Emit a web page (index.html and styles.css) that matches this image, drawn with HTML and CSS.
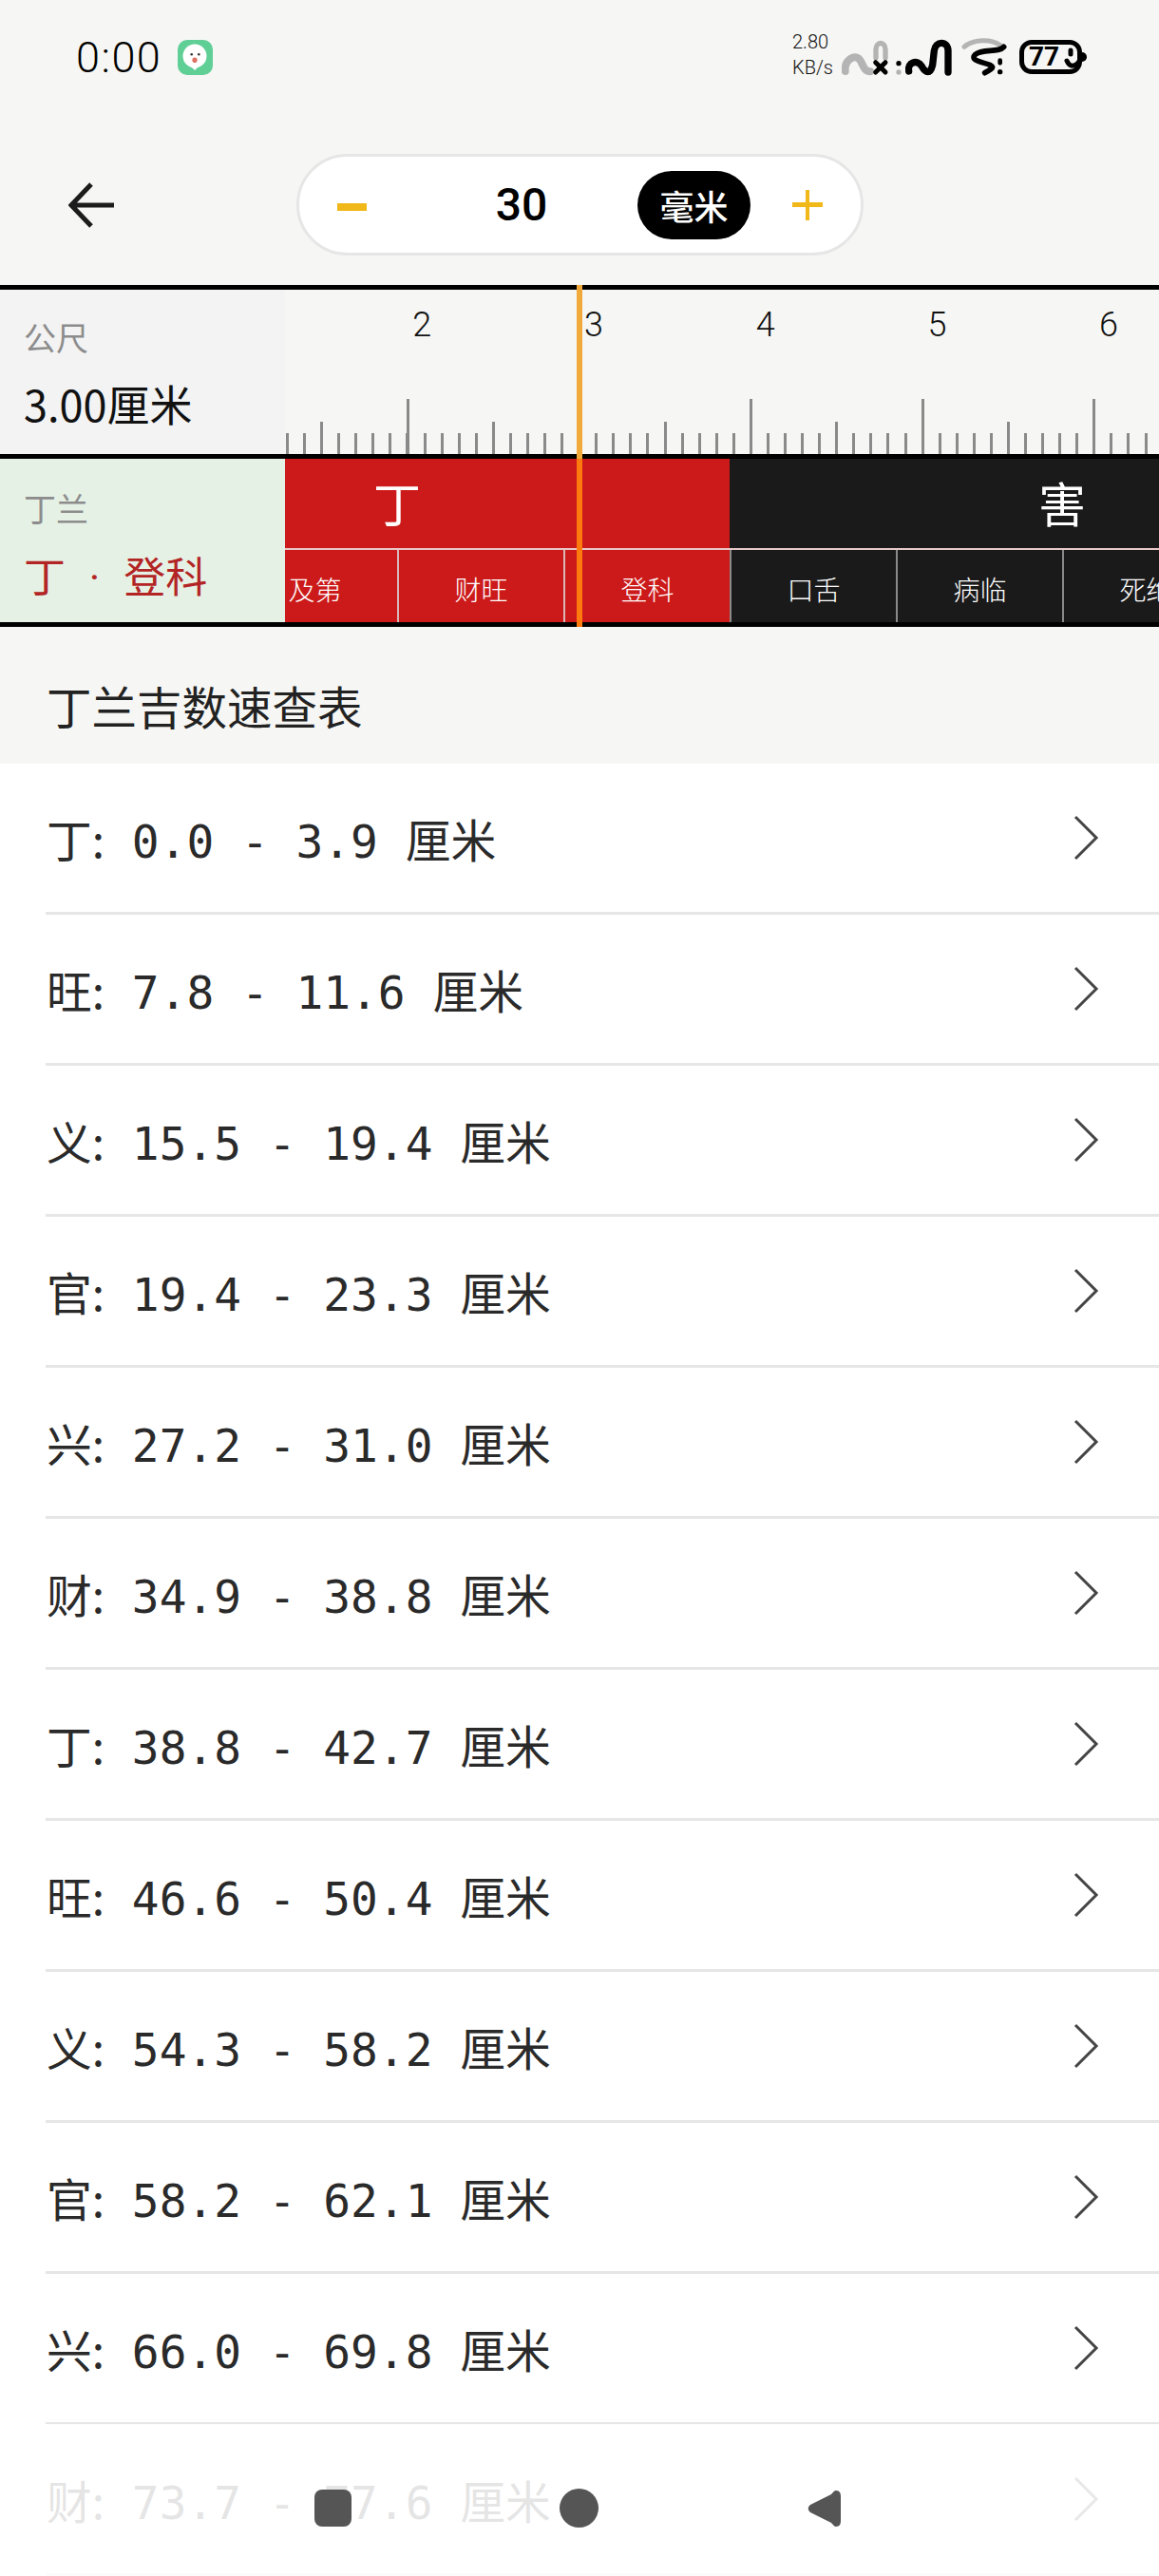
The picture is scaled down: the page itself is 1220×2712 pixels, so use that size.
FILE: index.html
```html
<!doctype html>
<html>
<head>
<meta charset="UTF-8">
<meta name="viewport" content="width=device-width, initial-scale=1">
<link rel="stylesheet" href="styles.css">
</head>
<body>
<div class="phone">

  <div class="status">
    <span class="clock">0:00</span>
    <svg class="app-icon" viewBox="0 0 37 37">
      <rect width="37" height="37" rx="10" fill="#5fcf96"/>
      <circle cx="18" cy="17" r="12.500" fill="#fff"/>
      <path d="M14 28l4 4 4-4z" fill="#fff"/>
      <circle cx="14.700" cy="15.300" r="1.300" fill="#333"/>
      <circle cx="22.300" cy="15.300" r="1.300" fill="#333"/>
      <ellipse cx="18" cy="21.300" rx="2.600" ry="2.800" fill="#e0705f"/>
    </svg>
    <div class="net-speed">2.80<br>KB/s</div>
    <svg class="status-icons" viewBox="320 60 660 120">
      <g fill="none" stroke-linecap="round" stroke-linejoin="round">
        <path d="M331 165C328 128 365 106 380 133C392 158 395 166 410 166" stroke="#b4b4b4" stroke-width="24"/>
        <path d="M428 122V96C428 70 458 70 458 96V122" stroke="#b4b4b4" stroke-width="16"/>
        <path d="M427 137L458 168M458 137L427 168" stroke="#000" stroke-width="15"/>
        <path d="M532 165C526 135 560 128 572 148C585 172 600 175 607 145L612 100C616 68 655 68 656 100V168" stroke="#000" stroke-width="22"/>
        <path d="M707 88C735 62 795 62 822 84" stroke="#b4b4b4" stroke-width="15"/>
        <path d="M832 88C815 108 765 92 742 112C722 132 765 135 790 146C806 154 785 162 772 170" stroke="#000" stroke-width="17"/>
      </g>
      <rect x="813" y="124" width="14" height="22" rx="7" fill="#000"/>
      <circle cx="820" cy="167" r="8" fill="#000"/>
      <circle cx="500" cy="140" r="8" fill="#000"/>
      <circle cx="500" cy="168" r="8" fill="#b4b4b4"/>
    </svg>
    <div class="battery">
      <span class="battery-num">77</span>
      <svg class="battery-bolt" viewBox="0 0 20 26"><path d="M9 6v4M5 17c3 7 9 7 14-1" fill="none" stroke="#000" stroke-width="5" stroke-linecap="round"/></svg>
    </div>
  </div>

  <div class="toolbar">
    <svg class="back" viewBox="0 0 48 48">
      <path d="M24 2L3 24l21 22M3 24h45" fill="none" stroke="#1c1c1c" stroke-width="5"/>
    </svg>
    <div class="stepper">
      <span class="minus"></span>
      <span class="value">30</span>
      <span class="unit">毫米</span>
      <span class="plus"></span>
    </div>
  </div>

  <div class="ruler">
    <div class="ruler-row">
      <div class="ruler-info">
        <div class="info-label">公尺</div>
        <div class="info-value">3.00厘米</div>
      </div>
      <div class="scale">
        <span>2</span><span>3</span><span>4</span><span>5</span><span>6</span>
      </div>
    </div>
    <div class="sector-row">
      <div class="ruler-info green">
        <div class="info-label">丁兰</div>
        <div class="info-value red">丁 <span class="dot">·</span> 登科</div>
      </div>
      <div class="sectors">
        <div class="sector good">
          <div class="sector-name">丁</div>
          <div class="sector-subs"><span></span><span>及第</span><span>财旺</span><span>登科</span></div>
        </div>
        <div class="sector bad">
          <div class="sector-name">害</div>
          <div class="sector-subs"><span>口舌</span><span>病临</span><span>死绝</span><span></span></div>
        </div>
      </div>
    </div>
    <div class="needle"></div>
  </div>

  <h2 class="list-title">丁兰吉数速查表</h2>

  <ul class="list">
    <li><span class="txt"><b>丁:</b> 0.0 - 3.9 厘米</span><svg class="chev" viewBox="0 0 28 48"><path d="M3 2l22 22L3 46"/></svg></li>
    <li><span class="txt"><b>旺:</b> 7.8 - 11.6 厘米</span><svg class="chev" viewBox="0 0 28 48"><path d="M3 2l22 22L3 46"/></svg></li>
    <li><span class="txt"><b>义:</b> 15.5 - 19.4 厘米</span><svg class="chev" viewBox="0 0 28 48"><path d="M3 2l22 22L3 46"/></svg></li>
    <li><span class="txt"><b>官:</b> 19.4 - 23.3 厘米</span><svg class="chev" viewBox="0 0 28 48"><path d="M3 2l22 22L3 46"/></svg></li>
    <li><span class="txt"><b>兴:</b> 27.2 - 31.0 厘米</span><svg class="chev" viewBox="0 0 28 48"><path d="M3 2l22 22L3 46"/></svg></li>
    <li><span class="txt"><b>财:</b> 34.9 - 38.8 厘米</span><svg class="chev" viewBox="0 0 28 48"><path d="M3 2l22 22L3 46"/></svg></li>
    <li><span class="txt"><b>丁:</b> 38.8 - 42.7 厘米</span><svg class="chev" viewBox="0 0 28 48"><path d="M3 2l22 22L3 46"/></svg></li>
    <li><span class="txt"><b>旺:</b> 46.6 - 50.4 厘米</span><svg class="chev" viewBox="0 0 28 48"><path d="M3 2l22 22L3 46"/></svg></li>
    <li><span class="txt"><b>义:</b> 54.3 - 58.2 厘米</span><svg class="chev" viewBox="0 0 28 48"><path d="M3 2l22 22L3 46"/></svg></li>
    <li><span class="txt"><b>官:</b> 58.2 - 62.1 厘米</span><svg class="chev" viewBox="0 0 28 48"><path d="M3 2l22 22L3 46"/></svg></li>
    <li><span class="txt"><b>兴:</b> 66.0 - 69.8 厘米</span><svg class="chev" viewBox="0 0 28 48"><path d="M3 2l22 22L3 46"/></svg></li>
    <li><span class="txt"><b>财:</b> 73.7 - 77.6 厘米</span><svg class="chev" viewBox="0 0 28 48"><path d="M3 2l22 22L3 46"/></svg></li>
  </ul>

  <div class="fade"></div>
  <div class="navbar">
    <span class="nav-square"></span>
    <span class="nav-circle"></span>
    <svg class="nav-back" viewBox="0 0 36 40"><path d="M30 1c4 0 5 3 5 6v26c0 3-1 6-5 6-2 0-3-2-5-4L3 24c-3-3-3-5 0-8L25 5c2-2 3-4 5-4z" fill="#555"/></svg>
  </div>

</div>
</body>
</html>
```

FILE: styles.css
```css
html, body{
  margin: 0;
  padding: 0;
}

body{
  font-family: "Noto Sans CJK SC", sans-serif;
  color: #222;
}

.phone{
  position: relative;
  width: 1220px;
  height: 2712px;
  overflow: hidden;
  background: #f6f6f4;
}

/* status bar */
.status{
  display: flex;
  align-items: center;
  height: 120px;
  padding-left: 80px;
  box-sizing: border-box;
}

.clock{
  width: 107px;
  font-family: Roboto, sans-serif;
  font-weight: 300;
  font-size: 45px;
  letter-spacing: 1.500px;
  color: #000;
}

.app-icon{
  flex: none;
  width: 37px;
  height: 37px;
}

.net-speed{
  flex: none;
  margin: -4px 0 0 610px;
  width: 52px;
  font-family: Roboto, sans-serif;
  font-weight: 300;
  font-size: 20px;
  line-height: 27px;
  color: #111;
}

.status-icons{
  flex: none;
  width: 220px;
  height: 40px;
}

.battery{
  position: relative;
  flex: none;
  display: flex;
  align-items: center;
  box-sizing: border-box;
  width: 66px;
  height: 36px;
  margin-left: -33px;
  padding-left: 5px;
  border: 5px solid #000;
  border-radius: 13px;
}

.battery::after{
  content: "";
  position: absolute;
  right: -10px;
  top: 8px;
  width: 5px;
  height: 10px;
  border-radius: 0 5px 5px 0;
  background: #000;
}

.battery-num{
  font-family: Roboto, sans-serif;
  font-weight: 700;
  font-size: 28px;
  line-height: 26px;
  color: #000;
}

.battery-bolt{
  flex: none;
  width: 20px;
  height: 26px;
  margin-left: 3px;
  overflow: visible;
}

/* toolbar */
.toolbar{
  display: flex;
  align-items: center;
  height: 180px;
  padding: 11px 0 0 72px;
  box-sizing: border-box;
}

.back{
  width: 48px;
  height: 48px;
}

.stepper{
  display: flex;
  align-items: center;
  box-sizing: border-box;
  width: 597px;
  height: 107px;
  margin-left: 192px;
  border: 3px solid #e6e6e6;
  border-radius: 54px;
  background: #fff;
}

.minus{
  width: 31px;
  height: 8px;
  margin: 5px 0 0 40px;
  background: #f0b818;
}

.value{
  width: 100px;
  margin-left: 113px;
  text-align: center;
  font-family: Roboto, sans-serif;
  font-weight: 500;
  font-size: 48px;
  color: #000;
}

.unit{
  width: 119px;
  height: 72px;
  margin-left: 72px;
  border-radius: 36px;
  background: #000;
  color: #fff;
  font-size: 36px;
  font-weight: 500;
  line-height: 72px;
  text-align: center;
}

.plus{
  width: 32px;
  height: 32px;
  margin-left: 44px;
  background:
    linear-gradient(#f0b818, #f0b818) center / 4px 100% no-repeat,
    linear-gradient(#f0b818, #f0b818) center / 100% 5px no-repeat;
}

/* ruler */
.ruler{
  position: relative;
  border-top: 5px solid #000;
}

.ruler-row{
  display: flex;
  height: 173px;
}

.sector-row{
  display: flex;
  height: 172px;
  border-top: 5px solid #000;
  border-bottom: 5px solid #000;
}

.ruler-info{
  flex: none;
  width: 300px;
  box-sizing: border-box;
  padding: 28px 0 0 25px;
  background: #f3f3f3;
}

.ruler-info.green{
  background: #e6f1e6;
  padding-top: 30px;
}

.info-label{
  font-size: 34px;
  line-height: 44px;
  color: #8c8c8c;
}

.info-value{
  margin-top: 18px;
  font-size: 45px;
  line-height: 60px;
  color: #111;
  white-space: nowrap;
}

.info-value.red{
  color: #b32525;
  font-size: 44px;
}

.dot{
  margin: 0 15px;
  font-family: Roboto, sans-serif;
}

.scale{
  flex: 1;
  display: flex;
  padding-left: 54px;
  overflow: hidden;
  background:
    repeating-linear-gradient(90deg, transparent 0, transparent 127.5px, #8a8a8a 127.5px, #8a8a8a 130.5px, transparent 130.5px, transparent 180.7px) bottom / 100% 58px no-repeat,
    repeating-linear-gradient(90deg, transparent 0, transparent 37.15px, #8a8a8a 37.15px, #8a8a8a 40.15px, transparent 40.15px, transparent 180.7px) bottom / 100% 34px no-repeat,
    repeating-linear-gradient(90deg, transparent 0, transparent 1px, #8a8a8a 1px, #8a8a8a 4px, transparent 4px, transparent 18.07px) bottom / 100% 22px no-repeat;
}

.scale span{
  flex: none;
  width: 180.7px;
  padding-top: 10px;
  text-align: center;
  font-family: Roboto, sans-serif;
  font-weight: 300;
  font-size: 36px;
  line-height: 54px;
  color: #111;
}

.sectors{
  flex: 1;
  display: flex;
  overflow: hidden;
}

.sector{
  flex: none;
  width: 700px;
  color: #fff;
}

.sector:first-child{
  margin-left: -232px;
}

.sector.good{
  background: #cc1a1a;
}

.sector.bad{
  background: #1a1a1a;
}

.sector-name{
  height: 94px;
  text-align: center;
  font-size: 50px;
  line-height: 90px;
  border-bottom: 2px solid #e8c8c8;
}

.sector-subs{
  display: flex;
  height: 76px;
}

.sector-subs span{
  flex: none;
  width: 175px;
  box-sizing: border-box;
  border-left: 2px solid #d8b8b8;
  text-align: center;
  font-size: 28px;
  font-weight: 300;
  line-height: 82px;
}

.sector.bad .sector-subs span{
  border-left-color: #8a8a8a;
}

.needle{
  position: absolute;
  left: 607px;
  top: -5px;
  bottom: 0;
  width: 6px;
  background: linear-gradient(#f2a93c 0, #f2a93c 183px, #ff7a0e 183px);
}

/* list */
.list-title{
  margin: 0;
  height: 144px;
  padding-left: 49px;
  box-sizing: border-box;
  font-size: 47.5px;
  font-weight: 400;
  line-height: 166px;
  color: #222;
}

.list{
  margin: 0;
  padding: 0;
  list-style: none;
  background: #fff;
}

.list li{
  display: flex;
  align-items: center;
  box-sizing: border-box;
  height: 159px;
  margin-left: 48px;
  padding: 0 63px 0 1px;
  border-bottom: 3px solid #e6e6e6;
}

.txt{
  flex: 1;
  font-family: "DejaVu Sans Mono", "Noto Sans CJK SC", monospace;
  font-size: 47.8px;
  color: #2a2a2a;
  white-space: pre;
}

.txt b{
  font-family: "Noto Sans CJK SC", sans-serif;
  font-weight: 400;
}

.chev{
  width: 28px;
  height: 48px;
  fill: none;
  stroke: #444;
  stroke-width: 3;
}

/* bottom */
.fade{
  position: absolute;
  left: 0;
  right: 0;
  bottom: 0;
  height: 160px;
  background: rgba(255, 255, 255, 0.88);
}

.navbar{
  position: absolute;
  left: 0;
  right: 0;
  bottom: 0;
  height: 92px;
}

.nav-square{
  position: absolute;
  left: 331px;
  top: 1px;
  width: 39px;
  height: 39px;
  border-radius: 8px;
  background: #555;
}

.nav-circle{
  position: absolute;
  left: 589px;
  top: 0;
  width: 41px;
  height: 41px;
  border-radius: 50%;
  background: #555;
}

.nav-back{
  position: absolute;
  left: 850px;
  top: 1px;
  width: 36px;
  height: 40px;
}
```
